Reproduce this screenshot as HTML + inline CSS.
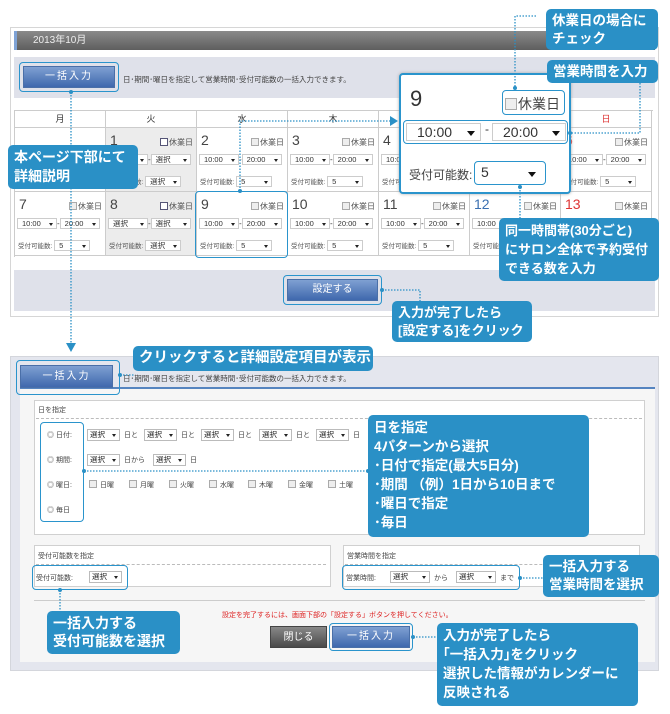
<!DOCTYPE html>
<html><head><meta charset="utf-8">
<style>
*{margin:0;padding:0;box-sizing:border-box}
body{width:670px;height:714px;background:#fff;position:relative;overflow:hidden;font-family:"Liberation Sans","Noto Sans CJK JP",sans-serif;color:#333}
.a{position:absolute}
.panel{border:1px solid #d6d6d6;background:#fff}
.hdr{background:linear-gradient(#8a8a8a,#5e5e5e);color:#eee;font-size:10px;line-height:19px;padding-left:16px;border-left:3px solid #7fa3d6}
.band{background:#dfe1ea}
.btn{background:linear-gradient(#7fa0d2,#3f68ad);color:#fff;font-size:10px;text-align:center;border:1px solid #4a6fa8;letter-spacing:2px}
.hl{border:1.5px solid #2a94cc;border-radius:4px}
.desc{font-size:7.5px;color:#444;white-space:nowrap}
.grid{border-top:1px solid #ccc;border-left:1px solid #ccc}
.hcell{position:absolute;top:0;height:17px;border-right:1px solid #ccc;border-bottom:1px solid #ccc;text-align:center;font-size:9px;line-height:17px;width:91px}
.cell{position:absolute;width:91px;height:64px;border-right:1px solid #ccc;border-bottom:1px solid #ccc;font-size:7px}
.cell.g{background:#ececec}
.dn{position:absolute;left:4px;top:4px;font-size:14px;color:#444}
.hol{position:absolute;right:3px;top:9px;font-size:8px;color:#555}
.cb{display:inline-block;width:8px;height:8px;border:1px solid #aaa;background:#eee;vertical-align:-1px;margin-right:1px}
.tr{position:absolute;left:2px;top:26px;white-space:nowrap;font-size:8px}
.sel{display:inline-block;width:40px;height:11px;border:1px solid #ccc;background:#fff;font-size:7.5px;line-height:10px;padding-left:4px;position:relative;color:#333}
.sel:after{content:"";position:absolute;right:3px;top:4px;border:2.5px solid transparent;border-top:3px solid #222}
.cap{position:absolute;left:3px;top:48px;font-size:6.5px;color:#555;white-space:nowrap}
.cap .sel{width:36px}
.co{background:#2a90c6;color:#fff;font-weight:bold;border-radius:5px;font-size:13.5px;line-height:18px;padding:3px 6px;white-space:nowrap;overflow:hidden}
.lab{font-size:7px;color:#444;white-space:nowrap}
.box{border:1px solid #d0d0d0;background:#fff}
.s{position:absolute;width:33px;height:12px;border:1px solid #bbb;background:#fff;font-size:7.5px;line-height:10px;padding-left:2px;color:#222}
.s:after{content:"";position:absolute;right:3px;top:4px;border:2.5px solid transparent;border-top:3px solid #222}
.t{position:absolute;font-size:7px;color:#444;white-space:nowrap}
</style></head><body>

<!-- TOP PANEL -->
<div class="a panel" style="left:10px;top:27px;width:649px;height:290px"></div>
<div class="a hdr" style="left:14px;top:31px;width:641px;height:19px">2013年10月</div>
<div class="a band" style="left:14px;top:57px;width:641px;height:41px"></div>
<div class="a hl" style="left:19px;top:62px;width:100px;height:30px"></div>
<div class="a btn" style="left:23px;top:66px;width:92px;height:22px;line-height:20px">一括入力</div>
<div class="a desc" style="left:123px;top:74px">日･期間･曜日を指定して営業時間･受付可能数の一括入力できます。</div>

<div class="a grid" style="left:14px;top:110px;width:639px;height:147px">
<div class="hcell" style="left:0">月</div>
<div class="hcell" style="left:91px">火</div>
<div class="hcell" style="left:182px">水</div>
<div class="hcell" style="left:273px">木</div>
<div class="hcell" style="left:364px">金</div>
<div class="hcell" style="left:455px">土</div>
<div class="hcell" style="left:546px;color:#d33">日</div>

<div class="cell" style="left:0;top:17px"></div>
<div class="cell g" style="left:91px;top:17px"><span class="dn">1</span><span class="hol"><i class="cb" style="background:#fff;border-color:#557"></i>休業日</span><div class="tr"><span class="sel">選択</span>-<span class="sel">選択</span></div><div class="cap">受付可能数: <span class="sel">選択</span></div></div>
<div class="cell" style="left:182px;top:17px"><span class="dn">2</span><span class="hol"><i class="cb"></i>休業日</span><div class="tr"><span class="sel">10:00</span>-<span class="sel">20:00</span></div><div class="cap">受付可能数: <span class="sel">5</span></div></div>
<div class="cell" style="left:273px;top:17px"><span class="dn">3</span><span class="hol"><i class="cb"></i>休業日</span><div class="tr"><span class="sel">10:00</span>-<span class="sel">20:00</span></div><div class="cap">受付可能数: <span class="sel">5</span></div></div>
<div class="cell" style="left:364px;top:17px"><span class="dn">4</span><span class="hol"><i class="cb"></i>休業日</span><div class="tr"><span class="sel">10:00</span>-<span class="sel">20:00</span></div><div class="cap">受付可能数: <span class="sel">5</span></div></div>
<div class="cell" style="left:455px;top:17px"><span class="dn">5</span><span class="hol"><i class="cb"></i>休業日</span><div class="tr"><span class="sel">10:00</span>-<span class="sel">20:00</span></div><div class="cap">受付可能数: <span class="sel">5</span></div></div>
<div class="cell" style="left:546px;top:17px"><span class="dn" style="color:#d33">6</span><span class="hol"><i class="cb"></i>休業日</span><div class="tr"><span class="sel">10:00</span>-<span class="sel">20:00</span></div><div class="cap">受付可能数: <span class="sel">5</span></div></div>

<div class="cell" style="left:0;top:81px"><span class="dn">7</span><span class="hol"><i class="cb"></i>休業日</span><div class="tr"><span class="sel">10:00</span>-<span class="sel">20:00</span></div><div class="cap">受付可能数: <span class="sel">5</span></div></div>
<div class="cell g" style="left:91px;top:81px"><span class="dn">8</span><span class="hol"><i class="cb" style="background:#fff;border-color:#557"></i>休業日</span><div class="tr"><span class="sel">選択</span>-<span class="sel">選択</span></div><div class="cap">受付可能数: <span class="sel">選択</span></div></div>
<div class="cell" style="left:182px;top:81px"><span class="dn">9</span><span class="hol"><i class="cb"></i>休業日</span><div class="tr"><span class="sel">10:00</span>-<span class="sel">20:00</span></div><div class="cap">受付可能数: <span class="sel">5</span></div></div>
<div class="cell" style="left:273px;top:81px"><span class="dn">10</span><span class="hol"><i class="cb"></i>休業日</span><div class="tr"><span class="sel">10:00</span>-<span class="sel">20:00</span></div><div class="cap">受付可能数: <span class="sel">5</span></div></div>
<div class="cell" style="left:364px;top:81px"><span class="dn">11</span><span class="hol"><i class="cb"></i>休業日</span><div class="tr"><span class="sel">10:00</span>-<span class="sel">20:00</span></div><div class="cap">受付可能数: <span class="sel">5</span></div></div>
<div class="cell" style="left:455px;top:81px"><span class="dn" style="color:#3a6fb0">12</span><span class="hol"><i class="cb"></i>休業日</span><div class="tr"><span class="sel">10:00</span>-<span class="sel">20:00</span></div><div class="cap">受付可能数: <span class="sel">5</span></div></div>
<div class="cell" style="left:546px;top:81px"><span class="dn" style="color:#d33">13</span><span class="hol"><i class="cb"></i>休業日</span><div class="tr"><span class="sel">10:00</span>-<span class="sel">20:00</span></div><div class="cap">受付可能数: <span class="sel">5</span></div></div>
</div>
<div class="a hl" style="left:195px;top:191px;width:93px;height:67px"></div>

<div class="a band" style="left:14px;top:270px;width:641px;height:41px"></div>
<div class="a hl" style="left:283px;top:275px;width:99px;height:30px"></div>
<div class="a btn" style="left:287px;top:279px;width:91px;height:22px;line-height:20px;letter-spacing:0">設定する</div>

<!-- popup -->
<div class="a" style="left:399px;top:73px;width:172px;height:121px;background:#fff;border:2px solid #2a94cc;border-radius:4px;box-shadow:0 0 3px #aaa"></div>
<div class="a" style="left:410px;top:86px;font-size:22px;color:#333">9</div>
<div class="a hl" style="left:502px;top:90px;width:63px;height:25px"></div>
<div class="a" style="left:505px;top:94px;font-size:14px;color:#444;white-space:nowrap"><i class="cb" style="width:12px;height:12px;vertical-align:-1px"></i>休業日</div>
<div class="a hl" style="left:403px;top:120px;width:165px;height:24px"></div>
<div class="a" style="left:406px;top:123px;width:75px;height:18px;border:1px solid #ccc;font-size:14px;line-height:16px;padding-left:10px">10:00<span style="position:absolute;right:5px;top:7px;border:4px solid transparent;border-top:5px solid #111"></span></div>
<div class="a" style="left:485px;top:122px;font-size:12px">-</div>
<div class="a" style="left:492px;top:123px;width:74px;height:18px;border:1px solid #ccc;font-size:14px;line-height:16px;padding-left:10px">20:00<span style="position:absolute;right:5px;top:7px;border:4px solid transparent;border-top:5px solid #111"></span></div>
<div class="a" style="left:409px;top:166px;font-size:12px;color:#444">受付可能数:</div>
<div class="a hl" style="left:474px;top:161px;width:72px;height:24px"></div>
<div class="a" style="left:478px;top:164px;width:64px;height:18px;font-size:14px;line-height:17px;padding-left:3px">5<span style="position:absolute;right:6px;top:8px;border:4px solid transparent;border-top:5px solid #111"></span></div>

<!-- BOTTOM PANEL -->
<div class="a" style="left:10px;top:356px;width:649px;height:315px;background:#e4e6ee;border:1px solid #d4d6dc"></div>
<div class="a" style="left:20px;top:387px;width:635px;height:1.5px;background:#5584c0"></div>
<div class="a" style="left:20px;top:389px;width:635px;height:273px;background:#f6f6f6"></div>
<div class="a hl" style="left:16px;top:360px;width:104px;height:35px"></div>
<div class="a btn" style="left:20px;top:365px;width:93px;height:23px;line-height:21px">一括入力</div>
<div class="a desc" style="left:123px;top:373px">日･期間･曜日を指定して営業時間･受付可能数の一括入力できます。</div>

<div class="a box" style="left:34px;top:400px;width:611px;height:135px"></div>
<div class="t" style="left:38px;top:405px">日を指定</div>
<div class="a" style="left:36px;top:418px;width:606px;border-top:1px dashed #bbb"></div>
<div class="a hl" style="left:40px;top:422px;width:44px;height:100px"></div>
<div class="t" style="left:47px;top:430px">◎ 日付:</div>
<div class="t" style="left:47px;top:455px">◎ 期間:</div>
<div class="t" style="left:47px;top:480px">◎ 曜日:</div>
<div class="t" style="left:47px;top:505px">◎ 毎日</div>
<div class="s" style="left:87px;top:429px">選択</div><div class="t" style="left:124px;top:430px">日と</div>
<div class="s" style="left:144px;top:429px">選択</div><div class="t" style="left:181px;top:430px">日と</div>
<div class="s" style="left:201px;top:429px">選択</div><div class="t" style="left:238px;top:430px">日と</div>
<div class="s" style="left:259px;top:429px">選択</div><div class="t" style="left:296px;top:430px">日と</div>
<div class="s" style="left:316px;top:429px">選択</div><div class="t" style="left:353px;top:430px">日</div>
<div class="s" style="left:87px;top:454px">選択</div><div class="t" style="left:124px;top:455px">日から</div>
<div class="s" style="left:153px;top:454px">選択</div><div class="t" style="left:190px;top:455px">日</div>
<div class="t" style="left:89px;top:480px"><i class="cb"></i> 日曜</div>
<div class="t" style="left:129px;top:480px"><i class="cb"></i> 月曜</div>
<div class="t" style="left:169px;top:480px"><i class="cb"></i> 火曜</div>
<div class="t" style="left:209px;top:480px"><i class="cb"></i> 水曜</div>
<div class="t" style="left:248px;top:480px"><i class="cb"></i> 木曜</div>
<div class="t" style="left:288px;top:480px"><i class="cb"></i> 金曜</div>
<div class="t" style="left:328px;top:480px"><i class="cb"></i> 土曜</div>

<div class="a box" style="left:34px;top:545px;width:297px;height:42px"></div>
<div class="t" style="left:38px;top:551px">受付可能数を指定</div>
<div class="a" style="left:36px;top:564px;width:290px;border-top:1px dashed #bbb"></div>
<div class="a hl" style="left:32px;top:565px;width:96px;height:25px"></div>
<div class="t" style="left:36px;top:573px">受付可能数:</div>
<div class="s" style="left:89px;top:571px;width:33px">選択</div>
<div class="a box" style="left:343px;top:545px;width:297px;height:42px"></div>
<div class="t" style="left:347px;top:551px">営業時間を指定</div>
<div class="a" style="left:345px;top:564px;width:292px;border-top:1px dashed #bbb"></div>
<div class="a hl" style="left:342px;top:565px;width:178px;height:25px"></div>
<div class="t" style="left:346px;top:573px">営業時間:</div>
<div class="s" style="left:390px;top:571px;width:40px">選択</div>
<div class="t" style="left:434px;top:573px">から</div>
<div class="s" style="left:456px;top:571px;width:40px">選択</div>
<div class="t" style="left:500px;top:573px">まで</div>

<div class="a" style="left:34px;top:600px;width:611px;border-top:1px solid #ccc"></div>
<div class="a" style="left:222px;top:610px;font-size:7px;color:#d22;white-space:nowrap">設定を完了するには、画面下部の「設定する」ボタンを押してください。</div>
<div class="a" style="left:270px;top:626px;width:57px;height:22px;background:linear-gradient(#888,#4a4a4a);color:#fff;font-size:10px;line-height:22px;text-align:center;border:1px solid #444">閉じる</div>
<div class="a hl" style="left:329px;top:623px;width:84px;height:28px"></div>
<div class="a btn" style="left:332px;top:626px;width:78px;height:22px;line-height:20px">一括入力</div>

<!-- connectors -->
<svg class="a" style="left:0;top:0" width="670" height="714">
<g stroke="#2a90c6" stroke-width="1.3" stroke-dasharray="1.5,1.5" fill="none">
<path d="M71 92V345"/>
<path d="M240 191V121H392"/>
<path d="M536 16H515V88"/>
<path d="M640 83V133H570"/>
<path d="M520 187V218"/>
<path d="M382 290H420V301"/>
<path d="M120 375H134"/>
<path d="M84 471H368"/>
<path d="M60 590V611"/>
<path d="M520 578H543"/>
<path d="M413 637H437"/>
</g>
<g fill="#2a90c6">
<path d="M66 343L76 343L71 352Z"/>
<path d="M390 116L398 121L390 126Z"/>
<circle cx="71" cy="92" r="2"/><circle cx="240" cy="191" r="2"/><circle cx="515" cy="88" r="2"/>
<circle cx="570" cy="133" r="2"/><circle cx="520" cy="187" r="2"/><circle cx="382" cy="290" r="2"/>
<circle cx="120" cy="375" r="2"/><circle cx="84" cy="471" r="2"/><circle cx="368" cy="471" r="2"/><circle cx="60" cy="590" r="2"/>
<circle cx="520" cy="578" r="2"/><circle cx="413" cy="637" r="2"/>
</g>
</svg>

<!-- callouts -->
<div class="a co" style="left:546px;top:9px;width:112px;height:41px">休業日の場合に<br>チェック</div>
<div class="a co" style="left:547px;top:60px;width:111px;height:23px;line-height:17px">営業時間を入力</div>
<div class="a co" style="left:8px;top:145px;width:130px;height:44px;font-size:14px;line-height:19px">本ページ下部にて<br>詳細説明</div>
<div class="a co" style="left:499px;top:218px;width:160px;height:63px;line-height:19px;font-size:13px">同一時間帯(30分ごと)<br>にサロン全体で予約受付<br>できる数を入力</div>
<div class="a co" style="left:392px;top:301px;width:140px;height:41px;font-size:13px">入力が完了したら<br>[設定する]をクリック</div>
<div class="a co" style="left:133px;top:346px;width:240px;height:25px;font-size:14.5px;line-height:19px">クリックすると詳細設定項目が表示</div>
<div class="a co" style="left:368px;top:415px;width:221px;height:122px;font-size:13.5px;line-height:19px">日を指定<br>4パターンから選択<br>･日付で指定(最大5日分)<br>･期間 （例）1日から10日まで<br>･曜日で指定<br>･毎日</div>
<div class="a co" style="left:543px;top:555px;width:116px;height:42px;font-size:13.5px">一括入力する<br>営業時間を選択</div>
<div class="a co" style="left:47px;top:611px;width:133px;height:43px;font-size:14px;line-height:18px">一括入力する<br>受付可能数を選択</div>
<div class="a co" style="left:437px;top:623px;width:201px;height:83px;line-height:19px;font-size:13.5px">入力が完了したら<br>｢一括入力｣をクリック<br>選択した情報がカレンダーに<br>反映される</div>
</body></html>
